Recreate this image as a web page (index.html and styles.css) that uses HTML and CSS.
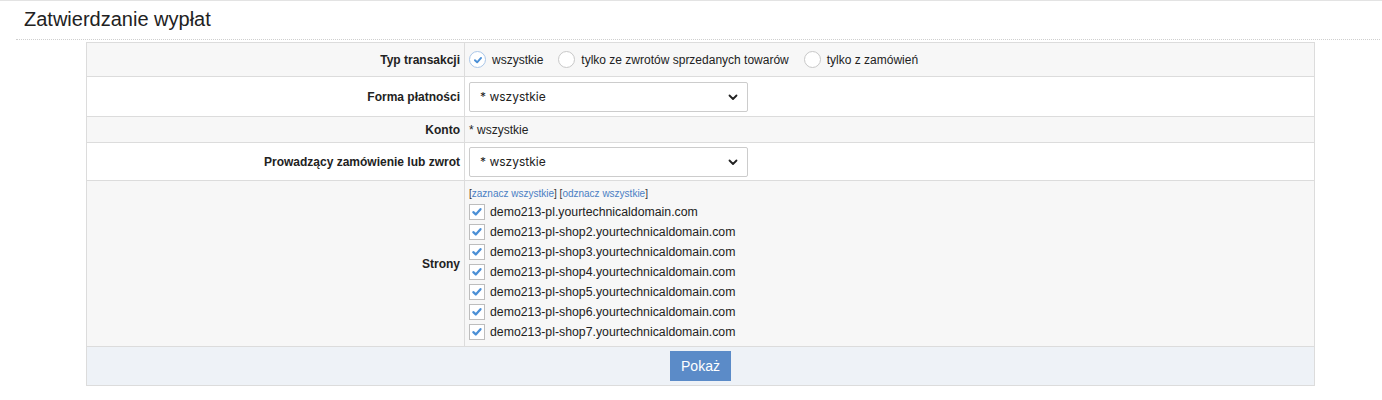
FILE: index.html
```html
<!DOCTYPE html>
<html lang="pl">
<head>
    <meta charset="UTF-8">
    <title>Zatwierdzanie wypłat</title>
    <link rel="stylesheet" href="styles.css">
</head>
<body>
    <div class="page">
        <div class="header">
            <h1>Zatwierdzanie wypłat</h1>
        </div>
        <table class="filters">
            <tr class="light row-type">
                <td class="label">Typ transakcji</td>
                <td class="value">
                    <div class="radios">
                        <label class="radio checked">
                            <span class="circle"><svg viewBox="0 0 16 16" width="16" height="16"><path d="M4.5 8.3 L7 10.6 L11.5 5.6" fill="none" stroke="#4a8fd6" stroke-width="2.2" stroke-linecap="round" stroke-linejoin="round"/></svg></span>
                            wszystkie
                        </label>
                        <label class="radio"><span class="circle"></span>tylko ze zwrotów sprzedanych towarów</label>
                        <label class="radio"><span class="circle"></span>tylko z zamówień</label>
                    </div>
                </td>
            </tr>
            <tr class="row-select first">
                <td class="label">Forma płatności</td>
                <td class="value">
                    <div class="select">
                        <span>* wszystkie</span>
                        <svg viewBox="0 0 12 12" width="12" height="12"><path d="M2.5 4.5 L6 8 L9.5 4.5" fill="none" stroke="#222" stroke-width="1.8" stroke-linecap="round" stroke-linejoin="round"/></svg>
                    </div>
                </td>
            </tr>
            <tr class="light row-text">
                <td class="label">Konto</td>
                <td class="value">* wszystkie</td>
            </tr>
            <tr class="row-select second">
                <td class="label">Prowadzący zamówienie lub zwrot</td>
                <td class="value">
                    <div class="select">
                        <span>* wszystkie</span>
                        <svg viewBox="0 0 12 12" width="12" height="12"><path d="M2.5 4.5 L6 8 L9.5 4.5" fill="none" stroke="#222" stroke-width="1.8" stroke-linecap="round" stroke-linejoin="round"/></svg>
                    </div>
                </td>
            </tr>
            <tr class="light row-sites">
                <td class="label">Strony</td>
                <td class="value">
                    <div class="links">[<a href="#">zaznacz wszystkie</a>] [<a href="#">odznacz wszystkie</a>]</div>
                    <ul class="sites" id="sites"></ul>
                </td>
            </tr>
            <tr class="footer">
                <td colspan="2"><button class="btn">Pokaż</button></td>
            </tr>
        </table>
    </div>

    <script>
        const sites = [
            'demo213-pl.yourtechnicaldomain.com',
            'demo213-pl-shop2.yourtechnicaldomain.com',
            'demo213-pl-shop3.yourtechnicaldomain.com',
            'demo213-pl-shop4.yourtechnicaldomain.com',
            'demo213-pl-shop5.yourtechnicaldomain.com',
            'demo213-pl-shop6.yourtechnicaldomain.com',
            'demo213-pl-shop7.yourtechnicaldomain.com'
        ];
        const list = document.getElementById('sites');
        sites.forEach(site => {
            const li = document.createElement('li');
            li.innerHTML = '<span class="box"><svg viewBox="0 0 16 16" width="14" height="14"><path d="M3.8 8.2 L6.6 10.8 L12 4.8" fill="none" stroke="#4a8fd6" stroke-width="2.6" stroke-linecap="round" stroke-linejoin="round"/></svg></span>' + site;
            list.appendChild(li);
        });
    </script>
</body>
</html>
```

FILE: styles.css
```css
body {
    margin: 0;
    background: #fff;
    color: #222;
    font-family: "Liberation Sans", Arial, sans-serif;
    font-size: 12px;
}
.page {
    border-top: 1px solid #e3e3e3;
}
.header {
    margin: 0 2px 0 16px;
    padding: 7px 0 0 8px;
    height: 31px;
    border-bottom: 1px dotted #cfcfcf;
}
.header h1 {
    margin: 0;
    font-size: 20px;
    font-weight: normal;
    color: #222;
}
.filters {
    margin: 2px 0 0 86px;
    width: 1229px;
    border-collapse: collapse;
    border: 1px solid #dcdcdc;
}
.filters td {
    border: 1px solid #dcdcdc;
    padding: 0 4px;
    vertical-align: middle;
}
.filters tr.light td {
    background: #f7f7f7;
}
.filters td.label {
    width: 369px;
    text-align: right;
    font-weight: bold;
    padding-right: 4px;
}
.row-type td {
    height: 33px;
}
.row-select.first td {
    height: 39px;
}
.row-select.second td {
    height: 37px;
}
.row-text td {
    height: 25px;
}
.row-sites td {
    height: 165px;
}
.radios {
    display: flex;
    align-items: center;
    gap: 15px;
}
.radio {
    display: flex;
    align-items: center;
    gap: 6px;
    font-size: 12px;
}
.circle {
    width: 15px;
    height: 15px;
    border: 1px solid #c8c8c8;
    border-radius: 50%;
    background: #fff;
    display: flex;
    align-items: center;
    justify-content: center;
}
.radio.checked .circle {
    border-color: #a9c6e8;
}
.radio .circle svg {
    width: 14px;
    height: 14px;
}
.select {
    border: 1px solid #cccccc;
    border-radius: 2px;
    background: #fff;
    display: flex;
    align-items: center;
    justify-content: space-between;
    padding: 0 8px 0 10px;
    box-sizing: border-box;
    width: 279px;
    height: 30px;
    font-family: Inter, "Liberation Sans", sans-serif;
    font-size: 12px;
}
.links {
    font-size: 10px;
    margin: 2px 0 3px 0;
    color: #333;
}
.links a {
    color: #4a80c4;
    text-decoration: none;
}
.sites {
    list-style: none;
    margin: 0;
    padding: 0;
}
.sites li {
    display: flex;
    align-items: center;
    gap: 5px;
    height: 20px;
    font-size: 12.3px;
}
.box {
    width: 14px;
    height: 14px;
    border: 1px solid #bdbdbd;
    background: #fff;
    display: flex;
    align-items: center;
    justify-content: center;
}
.footer td {
    background: #eef2f7;
    height: 38px;
    text-align: center;
    padding: 0;
}
.btn {
    background: #5b8bc8;
    color: #fff;
    border: none;
    width: 61px;
    height: 30px;
    font-family: "Liberation Sans", Arial, sans-serif;
    font-size: 14px;
    cursor: pointer;
}
```
